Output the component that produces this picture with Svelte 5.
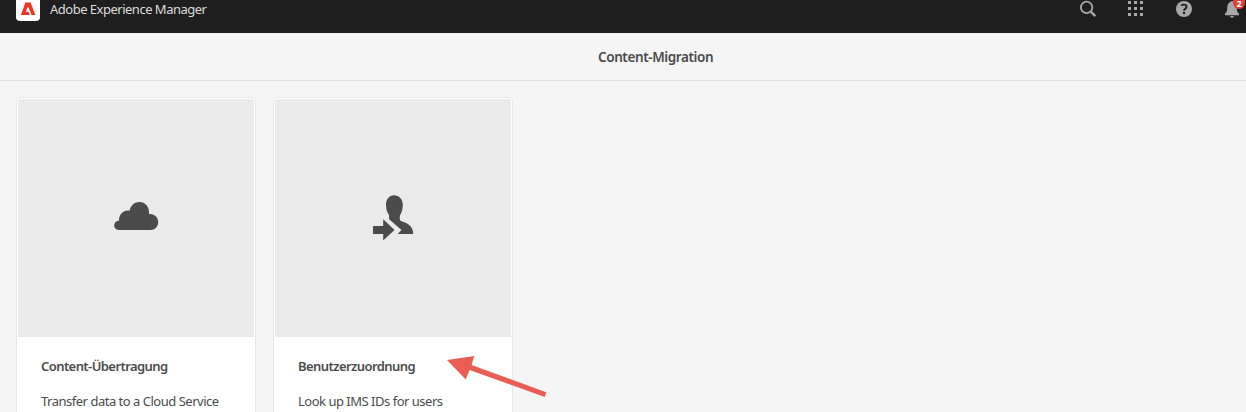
<script>
  const cards = [
    { icon: 'cloud', title: 'Content-Übertragung', text: 'Transfer data to a Cloud Service' },
    { icon: 'user', title: 'Benutzerzuordnung', text: 'Look up IMS IDs for users' }
  ];
  const dots = [0, 6, 12].flatMap((y) => [0, 6, 12].map((x) => [x, y]));
</script>

<div class="page">
  <header class="shell">
    <div class="brand">
      <svg class="logo" width="24" height="21" viewBox="0 0 24 21">
        <path fill="#fff" d="M0 0H24V17a4 4 0 0 1-4 4H4a4 4 0 0 1-4-4Z" />
        <path fill="#ee3524" d="M9.4 2.5H14.6L19.4 15H15.6L12 6.3L9.8 11.7H12.5L13.8 15H4.9Z" />
      </svg>
      <span class="product">Adobe Experience Manager</span>
    </div>
    <nav class="tools">
      <svg width="18" height="18" viewBox="0 0 18 18" fill="none" stroke="#a8a8a8">
        <circle cx="7.6" cy="7.4" r="5.7" stroke-width="1.8" />
        <path d="M11.8 11.6L16.3 16.1" stroke-width="2.4" />
      </svg>
      <svg width="18" height="18" viewBox="0 0 18 18" fill="#a8a8a8">
        {#each dots as [x, y]}
          <rect x={x + 1} y={y + 1} width="3" height="3" />
        {/each}
      </svg>
      <svg width="18" height="18" viewBox="0 0 18 18">
        <circle cx="9" cy="9" r="8" fill="#a8a8a8" />
        <path d="M6.2 5.4Q7.4 4.6 8.9 4.6C10.5 4.6 11.5 5.4 11.5 6.8C11.5 8.7 9 8.8 9 10.7" fill="none" stroke="#1e1e1e" stroke-width="1.9" />
        <circle cx="9" cy="13" r="1.25" fill="#1e1e1e" />
      </svg>
      <div class="bell">
        <svg width="18" height="18" viewBox="0 0 18 18" fill="#a8a8a8">
          <path d="M7.6 2V1.2H10.4V2C12.8 2.8 13.7 4.8 13.7 7.5C13.7 11 14.5 12.4 16 13.6V15.2H2V13.6C3.5 12.4 4.3 11 4.3 7.5C4.3 4.8 5.2 2.8 7.6 2Z" />
          <path d="M7 16H11Q10.6 17.7 9 17.7T7 16Z" />
        </svg>
        <span class="badge">2</span>
      </div>
    </nav>
  </header>

  <div class="titlebar"><h1>Content-Migration</h1></div>

  <main class="grid">
    {#each cards as card}
      <article class="card">
        <div class="preview">
          {#if card.icon === 'cloud'}
            <svg width="46" height="34" viewBox="0 0 46 34" fill="#4b4b4b">
              <path d="M5.5 29A4.6 4.6 0 1 1 6 19.8C5.7 14 10.2 8.9 16.4 9.7C18 4.3 21.5 1 26.5 1C32.3 1 36.6 5.7 36 13.1C41.7 12.6 45.2 16.5 45.2 21C45.2 25.5 42 29 37.4 29Z" />
            </svg>
          {:else}
            <svg width="42" height="46" viewBox="0 0 42 46" fill="#4b4b4b">
              <path d="M22 .2C17.3 .2 14 4 14 9.8C14 14.1 15.2 17.7 17.1 20.2V24.2L29.5 35L25.6 39H41.2C41.2 32.8 37.5 29 32.3 27.2C29.5 26.2 27.8 26 27.8 24.3V20.7C29.5 18.2 30.8 14.3 30.8 9.8C30.8 4 27 .2 22 .2Z" />
              <path d="M1 31H11.2V24.3L22.5 35L11.2 45.6V39H1Z" />
            </svg>
          {/if}
        </div>
        <div class="body">
          <h2>{card.title}</h2>
          <p>{card.text}</p>
        </div>
      </article>
    {/each}
  </main>

  <svg class="arrow" width="104" height="44" viewBox="0 0 104 44" fill="#ea5d55">
    <path d="M0 4L27.2 0L24.6 9L99.2 36.3L97.8 41L22.6 14.1L18.7 23.4Z" />
  </svg>
</div>

<style>
  .page {
    position: relative;
    height: 412px;
    overflow: hidden;
    background: #f5f5f5;
    color: #4b4b4b;
    font-family: 'Noto Sans', sans-serif;
  }
  .shell {
    display: flex;
    justify-content: space-between;
    align-items: flex-start;
    height: 33px;
    background: #1e1e1e;
  }
  .brand { display: flex; padding-left: 16px; gap: 10px; }
  .product {
    color: #dcdcdc;
    font-size: 13px;
    line-height: 18px;
    letter-spacing: -0.5px;
    white-space: nowrap;
  }
  .tools { display: flex; gap: 30px; padding-right: 5px; }
  .tools svg { display: block; }
  .bell { position: relative; }
  .badge {
    position: absolute;
    left: 10px;
    top: 0;
    width: 12px;
    height: 9px;
    border-radius: 0 0 6px 6px;
    background: #e03e3a;
    color: #fff;
    font-size: 9px;
    font-weight: 700;
    line-height: 7px;
    text-align: center;
  }
  .titlebar {
    box-sizing: border-box;
    height: 48px;
    padding-left: 598px;
    border-bottom: 1px solid #dfdfdf;
  }
  h1, h2, p { margin: 0; white-space: nowrap; }
  h1 {
    font-size: 13.5px;
    font-weight: 650;
    line-height: 48px;
    letter-spacing: -0.4px;
  }
  .grid { display: flex; gap: 17px; padding: 16px; }
  .card {
    box-sizing: border-box;
    width: 240px;
    height: 360px;
    flex: none;
    padding: 1px;
    border: 1px solid #e8e8e8;
    border-radius: 4px;
    background: #fff;
  }
  .preview {
    display: flex;
    justify-content: center;
    align-items: center;
    height: 238px;
    border-radius: 3px 3px 0 0;
    background: #eaeaea;
  }
  .preview svg { display: block; }
  .body { padding: 17px 23px; }
  h2 {
    font-size: 13px;
    font-weight: 650;
    line-height: 24px;
    letter-spacing: -0.57px;
  }
  p {
    margin-top: 11px;
    font-size: 13px;
    line-height: 24px;
    letter-spacing: -0.49px;
  }
  .arrow { position: absolute; left: 447px; top: 356px; }
</style>
